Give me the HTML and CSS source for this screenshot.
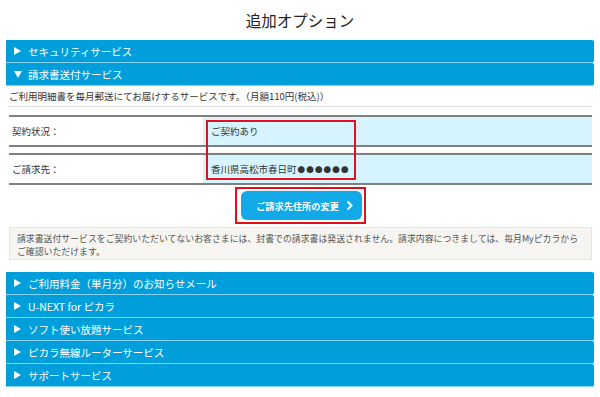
FILE: index.html
```html
<!DOCTYPE html>
<html lang="ja">

<head>
    <meta charset="UTF-8">
    <meta name="viewport" content="width=device-width, initial-scale=1.0">
    <title>追加オプション</title>
    <link rel="stylesheet" href="styles.css">
</head>

<body>
    <h1 class="page-title">追加オプション</h1>

    <div class="option-list">
        <div class="option-head">
            <svg class="arrow" width="7" height="8" viewBox="0 0 7 8"><polygon points="0,0 7,4 0,8" fill="#fff"/></svg>
            <span>セキュリティサービス</span>
        </div>
        <div class="option-head is-open">
            <svg class="arrow" width="8" height="7" viewBox="0 0 8 7"><polygon points="0,0 8,0 4,7" fill="#fff"/></svg>
            <span>請求書送付サービス</span>
        </div>

        <div class="option-body">
            <p class="option-desc">ご利用明細書を毎月郵送にてお届けするサービスです。（月額110円(税込)）</p>

            <div class="status-table">
                <div class="status-row">
                    <div class="status-label">契約状況：</div>
                    <div class="status-value">ご契約あり</div>
                </div>
                <div class="status-row">
                    <div class="status-label">ご請求先：</div>
                    <div class="status-value">香川県高松市春日町<span class="masked">●●●●●●</span></div>
                </div>
                <div class="mark-box value-mark"></div>
            </div>

            <div class="action">
                <div class="mark-box button-mark">
                    <a class="change-button" href="#">
                        <span>ご請求先住所の変更</span>
                        <svg width="7" height="11" viewBox="0 0 7 11"><polyline points="1.5,1.5 5.5,5.5 1.5,9.5" fill="none" stroke="#fff" stroke-width="2"/></svg>
                    </a>
                </div>
            </div>

            <div class="note">
                請求書送付サービスをご契約いただいてないお客さまには、封書での請求書は発送されません。請求内容につきましては、毎月Myピカラから<br>ご確認いただけます。
            </div>
        </div>

        <div class="option-head">
            <svg class="arrow" width="7" height="8" viewBox="0 0 7 8"><polygon points="0,0 7,4 0,8" fill="#fff"/></svg>
            <span>ご利用料金（単月分）のお知らせメール</span>
        </div>
        <div class="option-head">
            <svg class="arrow" width="7" height="8" viewBox="0 0 7 8"><polygon points="0,0 7,4 0,8" fill="#fff"/></svg>
            <span>U-NEXT for ピカラ</span>
        </div>
        <div class="option-head">
            <svg class="arrow" width="7" height="8" viewBox="0 0 7 8"><polygon points="0,0 7,4 0,8" fill="#fff"/></svg>
            <span>ソフト使い放題サービス</span>
        </div>
        <div class="option-head">
            <svg class="arrow" width="7" height="8" viewBox="0 0 7 8"><polygon points="0,0 7,4 0,8" fill="#fff"/></svg>
            <span>ピカラ無線ルーターサービス</span>
        </div>
        <div class="option-head">
            <svg class="arrow" width="7" height="8" viewBox="0 0 7 8"><polygon points="0,0 7,4 0,8" fill="#fff"/></svg>
            <span>サポートサービス</span>
        </div>
    </div>
</body>

</html>
```

FILE: styles.css
```css
:root {
    --bar: #009fdc;
    --bar-line: #88d2f0;
    --cell: #d6f4fe;
    --rule: #808080;
    --mark: #e2101c;
}

body {
    margin: 0;
    padding: 0 6px;
    font-family: "Noto Sans CJK JP", "Noto Sans", sans-serif;
    color: #333;
    background-color: #fff;
}

.page-title {
    margin: 0;
    height: 40px;
    line-height: 40px;
    text-align: center;
    font-size: 15.5px;
    font-weight: normal;
    color: #222;
}

.option-head {
    display: flex;
    align-items: center;
    gap: 7px;
    height: 22px;
    padding-left: 8px;
    background-color: var(--bar);
    border-bottom: 1px solid var(--bar-line);
    border-radius: 0 2px 2px 0;
    color: #fff;
    font-size: 10.5px;
}

.option-head.is-open {
    gap: 6px;
}

.arrow {
    flex: none;
}

.option-body {
    padding: 0 2px 12px 3px;
}

.option-desc {
    margin: 0;
    padding: 3px 0 3px;
    line-height: 14px;
    font-size: 9.5px;
    border-bottom: 1px solid #ddd;
}

.status-table {
    position: relative;
    margin-top: 8px;
}

.status-row {
    display: grid;
    grid-template-columns: 194px 1fr;
    height: 28px;
    border-top: 2px solid var(--rule);
    border-bottom: 2px solid var(--rule);
    font-size: 9.5px;
}

.status-row+.status-row {
    margin-top: 6px;
}

.status-label {
    display: flex;
    align-items: center;
    padding-left: 3px;
}

.status-value {
    display: flex;
    align-items: center;
    padding-left: 8px;
    background-color: var(--cell);
}

.masked {
    font-size: 7.5px;
    letter-spacing: 1.2px;
    margin-left: 1px;
}

.mark-box {
    border: 2px solid var(--mark);
}

.value-mark {
    position: absolute;
    top: 5px;
    left: 197px;
    width: 146px;
    height: 56px;
}

.action {
    display: flex;
    justify-content: center;
    margin-top: 2px;
}

.button-mark {
    padding: 2px 2px 2px 4px;
}

.change-button {
    display: flex;
    align-items: center;
    justify-content: center;
    gap: 7px;
    width: 121px;
    height: 29px;
    padding-left: 6px;
    box-sizing: border-box;
    border-radius: 6px;
    background-color: #12a9e8;
    color: #fff;
    font-size: 9.2px;
    font-weight: bold;
    text-decoration: none;
}

.note {
    margin-top: 3px;
    padding: 4px 7px;
    height: 33px;
    box-sizing: border-box;
    background-color: #f6f5f1;
    border: 1px solid #e6e4df;
    font-size: 8.9px;
    line-height: 13px;
    color: #555;
}
```
